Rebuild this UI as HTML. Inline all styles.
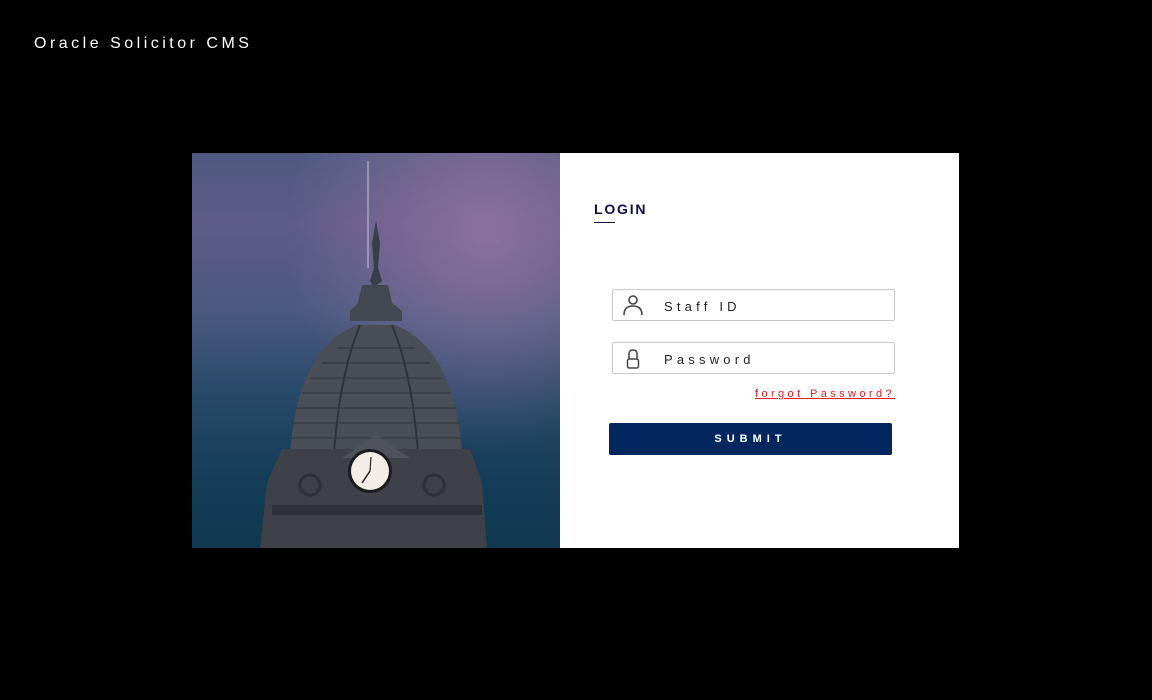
<!DOCTYPE html>
<html><head><meta charset="utf-8"><style>
*{margin:0;padding:0;box-sizing:border-box}
body{width:1152px;height:700px;background:#000;font-family:"Liberation Sans",sans-serif;position:relative;overflow:hidden}
.brand{position:absolute;left:34px;top:35px;color:#fff;font-size:16px;letter-spacing:3.5px}
.img{position:absolute;left:192px;top:153px;width:368px;height:395px;overflow:hidden;
background:linear-gradient(180deg,#4e5a80 0%,#5e5a88 18%,#4a5a80 40%,#2a4a6a 60%,#163e5a 80%,#0f3850 100%)}
.panel{position:absolute;left:560px;top:153px;width:399px;height:395px;background:#fff}
.login{position:absolute;left:34px;top:48px;font-size:14px;font-weight:bold;color:#0e0e48;letter-spacing:1.8px}
.uline{position:absolute;left:34px;top:69px;width:21px;height:1px;background:#0e0e48}
.field{position:absolute;left:52px;width:283px;height:32px;border:1px solid #c8c8c8;border-radius:2px}
.field span{position:absolute;left:51px;top:9px;font-size:13px;letter-spacing:4.2px;color:#222}
.field svg{position:absolute;left:9px;top:4px}
.forgot{position:absolute;right:64px;top:235px;font-size:11px;color:#e02020;letter-spacing:3.4px;text-decoration:underline}
.btn{position:absolute;left:49px;top:270px;width:283px;height:32px;background:#02265e;border-radius:2px;color:#fff;font-size:11px;font-weight:bold;letter-spacing:5px;text-align:center;line-height:32px}
</style></head><body>
<div class="brand">Oracle Solicitor CMS</div>
<div class="img">
<svg width="368" height="395" viewBox="0 0 368 395">
<defs><radialGradient id="p" cx="0.8" cy="0.2" r="0.55"><stop offset="0" stop-color="#a07aa8" stop-opacity="0.7"/><stop offset="1" stop-color="#a07aa8" stop-opacity="0"/></radialGradient></defs>
<rect width="368" height="395" fill="url(#p)"/>
<line x1="176" y1="8" x2="176" y2="115" stroke="#b8b8c8" stroke-width="1.2"/>
<path d="M184 68 L188 90 L186 115 L190 128 L182 134 L178 128 L182 115 L180 90 Z" fill="#3a3e48"/>
<path d="M170 132 L196 132 L200 150 L210 158 L210 168 L158 168 L158 158 L166 150 Z" fill="#444850"/>
<path d="M165 172 L203 172 Q262 195 270 300 L98 300 Q106 195 165 172 Z" fill="#4a4e56"/>
<g stroke="#30343a" stroke-width="1">
<line x1="130" y1="210" x2="238" y2="210"/><line x1="118" y1="225" x2="250" y2="225"/><line x1="110" y1="240" x2="258" y2="240"/><line x1="104" y1="255" x2="264" y2="255"/><line x1="100" y1="270" x2="268" y2="270"/><line x1="99" y1="285" x2="269" y2="285"/><line x1="145" y1="195" x2="223" y2="195"/>
<path d="M168 172 Q148 220 142 300 M200 172 Q220 220 226 300" fill="none" stroke-width="2"/>
</g>
<path d="M90 296 L278 296 L290 330 L295 395 L68 395 L75 330 Z" fill="#3e4248"/>
<path d="M150 305 L184 282 L218 305 Z" fill="#50545a"/>
<rect x="80" y="352" width="210" height="10" fill="#2e3238"/>
<circle cx="118" cy="332" r="10" fill="none" stroke="#2e3238" stroke-width="3"/>
<circle cx="242" cy="332" r="10" fill="none" stroke="#2e3238" stroke-width="3"/>
<circle cx="178" cy="318" r="22" fill="#1a1c20"/>
<circle cx="178" cy="318" r="19" fill="#f2ede6"/>
<line x1="178" y1="318" x2="170" y2="330" stroke="#222" stroke-width="1.5"/><line x1="178" y1="318" x2="179" y2="304" stroke="#222" stroke-width="1.2"/>
</svg>
</div>
<div class="panel">
<div class="login">LOGIN</div><div class="uline"></div>
<div class="field" style="top:136px"><svg width="22" height="22" viewBox="0 0 22 22"><circle cx="11" cy="6" r="4" fill="none" stroke="#444" stroke-width="1.6"/><path d="M2 21 Q2 12 11 12 Q20 12 20 21" fill="none" stroke="#444" stroke-width="1.6"/></svg><span>Staff ID</span></div>
<div class="field" style="top:189px"><svg width="22" height="22" viewBox="0 0 22 22"><path d="M7 12 V7 Q7 3 11 3 Q15 3 15 7 V12" fill="none" stroke="#444" stroke-width="1.5"/><rect x="5.5" y="12" width="11" height="9" rx="2" fill="none" stroke="#444" stroke-width="1.5"/></svg><span>Password</span></div>
<div class="forgot">forgot Password?</div>
<div class="btn">SUBMIT</div>
</div>
</body></html>
